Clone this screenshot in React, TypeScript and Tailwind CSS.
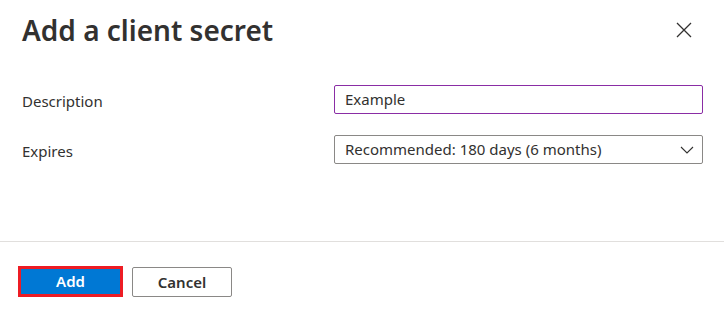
export default function App() {
  return (
    <div
      className="w-[724px] h-[323px] bg-white flex flex-col text-[#323130]"
      style={{ fontFamily: '"Noto Sans", "Open Sans", sans-serif' }}
    >
      <div className="flex items-center justify-between pl-[22px] pr-[30px] pt-[10px]">
        <h1 className="text-[28px] leading-[40px] font-semibold text-[#323130]">
          Add a client secret
        </h1>
        <button className="w-[20px] h-[20px] flex items-center justify-center">
          <svg width="16" height="16" viewBox="0 0 16 16">
            <path d="M1 1 L15 15 M15 1 L1 15" stroke="#323130" strokeWidth="1.3" />
          </svg>
        </button>
      </div>

      <div className="mt-[35px] pl-[22px] flex flex-col gap-[21px]">
        <div className="flex items-center">
          <label className="w-[312px] text-[15px] pt-[3px]">Description</label>
          <div className="w-[369px] h-[29px] border border-[#8a2da5] rounded-[2px] flex items-center px-[10px] text-[15px]">
            Example
          </div>
        </div>
        <div className="flex items-center">
          <label className="w-[312px] text-[15px] pt-[3px]">Expires</label>
          <div className="w-[369px] h-[29px] border border-[#8a8886] rounded-[2px] flex items-center justify-between pl-[10px] pr-[8px] text-[15px]">
            <span>Recommended: 180 days (6 months)</span>
            <svg width="14" height="8" viewBox="0 0 14 8">
              <path d="M1 1 L7 7 L13 1" fill="none" stroke="#323130" strokeWidth="1.1" />
            </svg>
          </div>
        </div>
      </div>

      <div className="mt-auto border-t border-[#e1dfdd] pt-[24px] pb-[26px] pl-[18px] flex gap-[9px]">
        <button className="w-[105px] h-[31px] border-[3px] border-[#ed1c24] bg-[#0078d4] text-white text-[15px] font-semibold flex items-center justify-center">
          Add
        </button>
        <button className="w-[100px] h-[30px] mt-[1px] border border-[#8a8886] rounded-[2px] bg-white text-[#323130] text-[15px] font-semibold flex items-center justify-center">
          Cancel
        </button>
      </div>
    </div>
  );
}
